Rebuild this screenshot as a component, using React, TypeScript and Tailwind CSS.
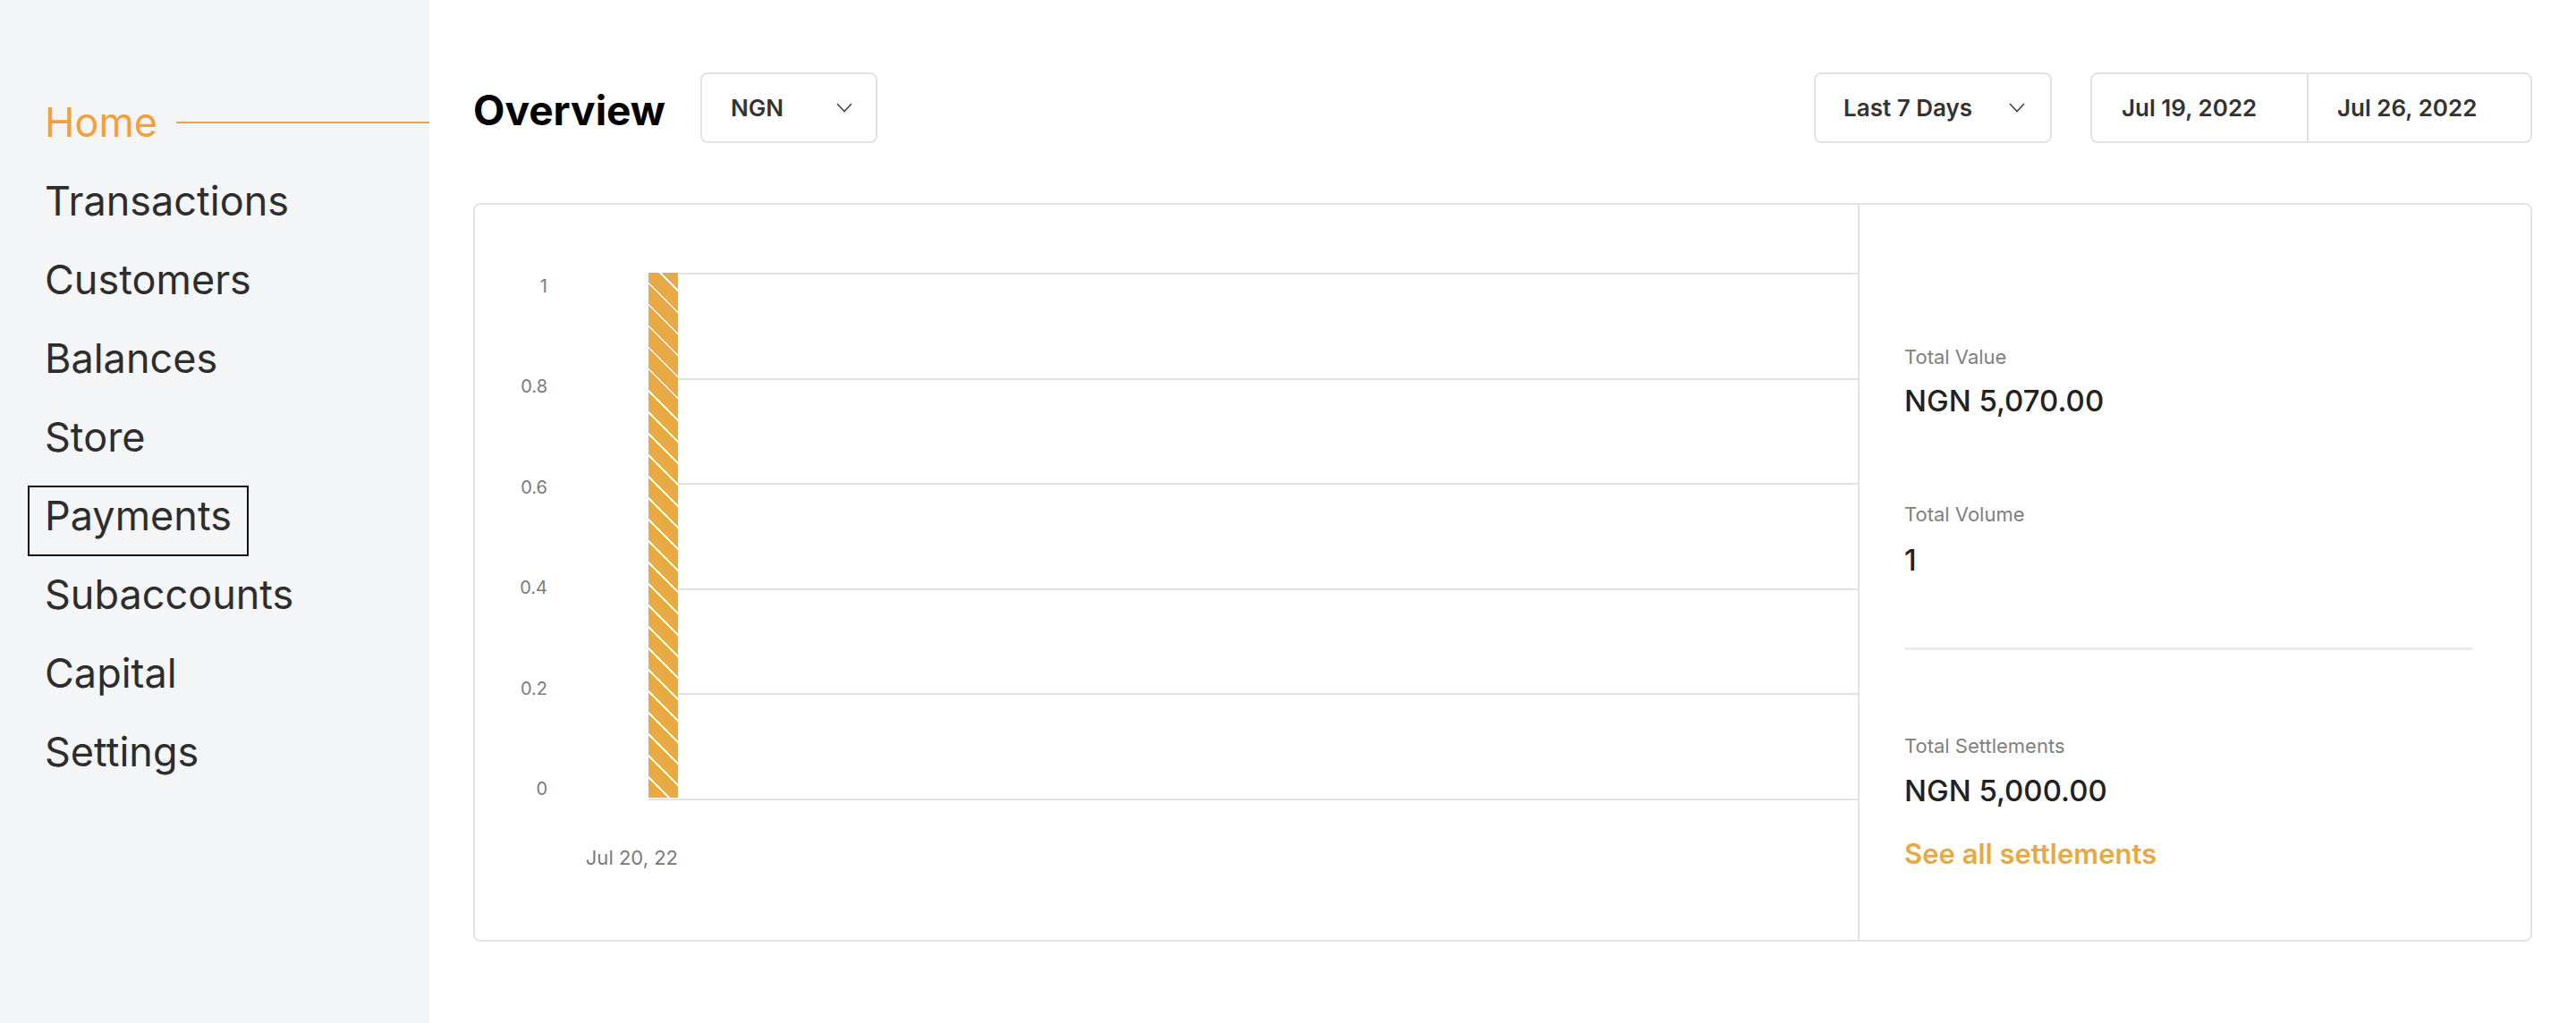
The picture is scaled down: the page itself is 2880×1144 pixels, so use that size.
import React from "react";

const navItems = ["Home", "Transactions", "Customers", "Balances", "Store", "Payments", "Subaccounts", "Capital", "Settings"];

function Chevron() {
  return (
    <svg width="18" height="11" viewBox="0 0 18 11" fill="none" className="shrink-0">
      <polyline points="1,1 9,9.5 17,1" stroke="#444" strokeWidth="1.6" fill="none" />
    </svg>
  );
}

export default function App() {
  const yLabels = ["1", "0.8", "0.6", "0.4", "0.2", "0"];
  return (
    <div className="flex min-h-[1144px] w-full bg-white font-['Inter',sans-serif]">
      {/* Sidebar */}
      <aside className="w-[480px] shrink-0 bg-[#f4f5f7] pt-[103px]">
        <nav className="flex flex-col gap-[9px] pl-[31px]">
          {navItems.map((item) => {
            const isHome = item === "Home";
            const isFocused = item === "Payments";
            return (
              <div key={item} className="flex items-start">
                <span
                  className={`inline-block border-2 px-[17px] pt-[6px] pb-[17px] text-[45px] leading-[52px] ${
                    isFocused ? "border-[#111]" : "border-transparent"
                  } ${isHome ? "text-[#f3a03a]" : "text-[#2d2d2d]"}`}
                >
                  {item}
                </span>
                {isHome && <div className="ml-[2px] mt-[33px] h-[2px] flex-1 bg-[#f3a03a]" />}
              </div>
            );
          })}
        </nav>
      </aside>

      {/* Main */}
      <main className="flex-1 px-[49px] pt-[81px]">
        {/* Header */}
        <div className="flex items-center">
          <h1 className="pt-[4px] text-[46px] font-bold leading-[56px] text-black">Overview</h1>
          <button className="ml-[39px] flex h-[79px] w-[198px] items-center justify-between rounded-[8px] border-2 border-[#e3e3e3] bg-white pl-[32px] pr-[26px] text-[26px] font-semibold text-[#333]">
            <span>NGN</span>
            <Chevron />
          </button>
          <div className="ml-auto flex items-center">
            <button className="flex h-[79px] w-[266px] items-center justify-between rounded-[8px] border-2 border-[#e3e3e3] bg-white pl-[31px] pr-[28px] text-[26px] font-semibold text-[#333]">
              <span>Last 7 Days</span>
              <Chevron />
            </button>
            <div className="ml-[43px] flex h-[79px] w-[494px] rounded-[8px] border-2 border-[#e3e3e3] bg-white text-[26px] font-semibold text-[#333]">
              <div className="flex w-[242px] items-center border-r-2 border-[#e3e3e3] pl-[33px]">Jul 19, 2022</div>
              <div className="flex flex-1 items-center pl-[32px]">Jul 26, 2022</div>
            </div>
          </div>
        </div>

        {/* Card */}
        <div className="mt-[67px] flex h-[826px] rounded-[8px] border-2 border-[#e3e3e3] bg-white">
          {/* Chart */}
          <div className="flex-1 pt-[76px]">
            <div className="flex">
              <div className="flex h-[592px] w-[81px] flex-col items-end justify-between text-[20px] leading-[30px] text-[#7a7a7a]">
                {yLabels.map((l) => (
                  <span key={l}>{l}</span>
                ))}
              </div>
              <div className="relative ml-[113px] flex h-[590px] flex-1 flex-col border-b-2 border-[#e2e2e2]">
                {[0, 1, 2, 3, 4].map((i) => (
                  <div key={i} className="flex-1 border-t-2 border-[#e2e2e2]" />
                ))}
                <div className="absolute bottom-[1px] left-0 top-0 w-[33px] bg-[repeating-linear-gradient(45deg,#e9aa45_0px,#e9aa45_15px,#ffffff_15px,#ffffff_17px)]" />
              </div>
            </div>
            <div className="mt-[47px] w-[227px] text-right text-[22px] leading-[30px] text-[#7a7a7a]">Jul 20, 22</div>
          </div>

          {/* Stats */}
          <div className="w-[752px] shrink-0 border-l-2 border-[#e2e2e2] pl-[50px] pt-[155px]">
            <div className="text-[22px] leading-[30px] text-[#808080]">Total Value</div>
            <div className="mt-[14px] text-[33px] font-medium leading-[40px] text-[#222]">NGN 5,070.00</div>
            <div className="mt-[92px] text-[22px] leading-[30px] text-[#808080]">Total Volume</div>
            <div className="mt-[16px] text-[33px] font-medium leading-[40px] text-[#222]">1</div>
            <div className="mt-[78px] h-[3px] w-[636px] bg-[#ececec]" />
            <div className="mt-[92px] text-[22px] leading-[30px] text-[#808080]">Total Settlements</div>
            <div className="mt-[15px] text-[33px] font-medium leading-[40px] text-[#222]">NGN 5,000.00</div>
            <a className="mt-[31px] block text-[31px] font-semibold leading-[40px] text-[#e9a844]" href="#">
              See all settlements
            </a>
          </div>
        </div>
      </main>
    </div>
  );
}
